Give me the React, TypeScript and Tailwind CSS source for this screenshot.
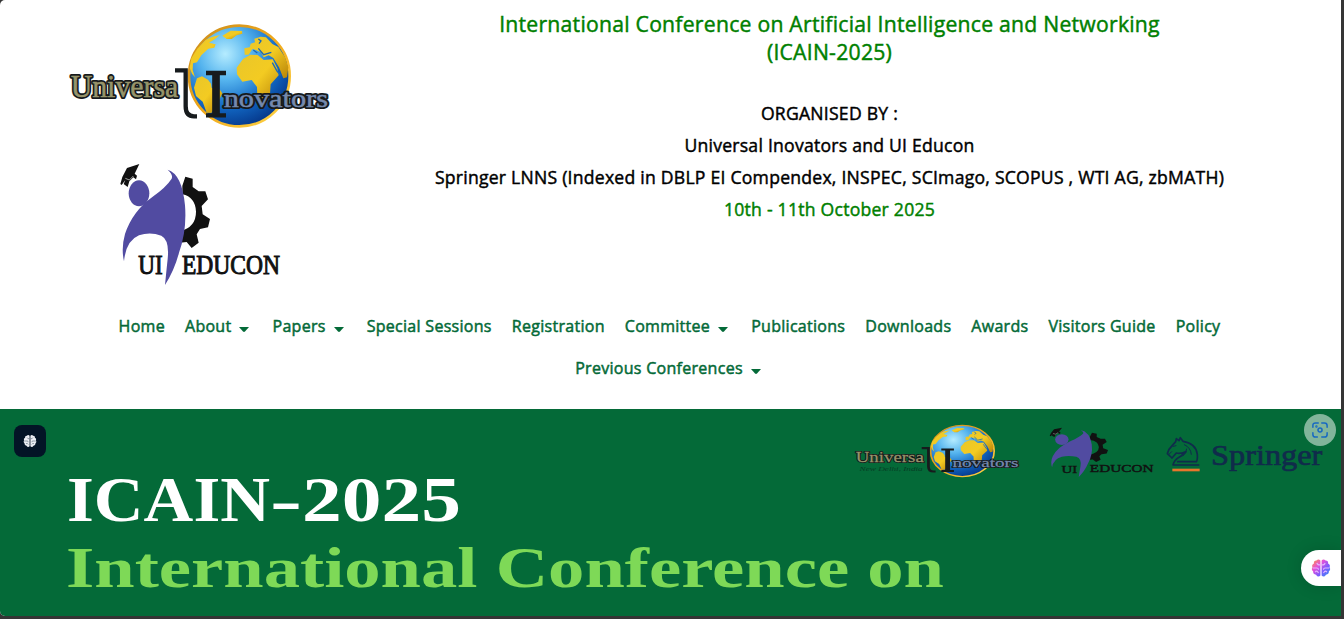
import React from "react";

const SERIF = "'Liberation Serif', serif";

function Globe() {
  return (
    <g>
      <defs>
        <radialGradient id="sea" cx="0.36" cy="0.28" r="0.75">
          <stop offset="0" stopColor="#b5ecff" />
          <stop offset="0.35" stopColor="#55b4ee" />
          <stop offset="0.7" stopColor="#1268c4" />
          <stop offset="1" stopColor="#06398c" />
        </radialGradient>
        <linearGradient id="land" x1="0" y1="0" x2="1" y2="1">
          <stop offset="0" stopColor="#e9c62a" />
          <stop offset="0.5" stopColor="#f3cb22" />
          <stop offset="1" stopColor="#b88307" />
        </linearGradient>
        <linearGradient id="rim" x1="0" y1="0" x2="1" y2="1">
          <stop offset="0" stopColor="#c98c1c" />
          <stop offset="0.5" stopColor="#f0a81a" />
          <stop offset="1" stopColor="#ffd84a" />
        </linearGradient>
      </defs>
      <circle cx="538" cy="183" r="151" fill="url(#sea)" stroke="url(#rim)" strokeWidth="8" />
      <g fill="url(#land)">
        <path d="M487 62 L512 47 L546 48 L547 56 L530 61 L515 72 L500 72 Z" />
        <path d="M437 75 L455 66 L480 60 L462 74 L447 83 L467 88 L463 98 L445 101 L424 121 L411 142 L399 145 L398 165 L405 187 L396 176 L389 158 L394 130 L412 101 Z" />
        <path d="M411 190 L426 184 L444 194 L453 206 L455 219 L478 222 L487 235 L479 251 L471 269 L454 294 L440 293 L428 260 L408 243 L402 218 Z" />
        <path d="M531 178 L530 158 L549 132 L571 119 L593 120 L611 135 L638 133 L652 160 L656 181 L632 208 L630 236 L610 260 L599 269 L592 246 L591 216 L575 195 L547 200 Z" />
        <path d="M554 119 L553 100 L569 97 L572 86 L585 82 L583 71 L602 65 L618 67 L637 87 L655 96 L675 126 L685 157 L681 187 L670 190 L657 157 L640 129 L626 121 L611 127 L603 112 L588 105 L577 102 L566 119 Z" />
      </g>
      <path
        d="M580 105 L592 114 M595 100 L611 119 L634 112 M637 143 L651 168 L662 181 M595 72 L603 78 L597 86"
        stroke="#1b69b7"
        strokeWidth="4"
        fill="none"
      />
    </g>
  );
}

function UniversalLogo({ className, subtitle = false }: { className: string; subtitle?: boolean }) {
  return (
    <svg className={className} viewBox="0 0 840 360" preserveAspectRatio="none" role="img">
      <Globe />
      <g fill="none" stroke="#171b1d" strokeWidth="13">
        <path d="M345 166 H377 V274 Q377 304 402 304 H411" />
        <path d="M438 174 H498 M438 301 H498" />
        <path d="M468 174 V301" strokeWidth="23" />
      </g>
      <g fontFamily={SERIF} strokeLinejoin="round">
        <g stroke="#171a1c" strokeWidth="12">
          <text x="32" y="245" fontSize="92" textLength="323" lengthAdjust="spacingAndGlyphs">Universa</text>
          <text x="491" y="276" fontSize="76" textLength="313" lengthAdjust="spacingAndGlyphs">novators</text>
        </g>
        <text x="32" y="245" fontSize="92" textLength="323" lengthAdjust="spacingAndGlyphs" fill="#96946a" stroke="#96946a" strokeWidth="1.5">Universa</text>
        <text x="491" y="276" fontSize="76" textLength="313" lengthAdjust="spacingAndGlyphs" fill="#7489ae" stroke="#7489ae" strokeWidth="1.5">novators</text>
      </g>
      {subtitle && (
        <text x="50" y="301" fontSize="34" textLength="300" lengthAdjust="spacingAndGlyphs" fontFamily={SERIF} fontStyle="italic" fill="#063d25">New Delhi, India</text>
      )}
    </svg>
  );
}

function EduconLogo({ className }: { className: string }) {
  return (
    <svg className={className} viewBox="0 0 540 405" preserveAspectRatio="none" role="img">
      <path fill="#111" d="M217 92 L226 65 L248 71 L248 96 L266 109 L286 109 L294 133 L275 153 L278 178 L300 192 L294 217 L270 222 L260 238 L266 263 L245 279 L230 261 L210 263 V228 Q258 217 258 170 Q256 126 217 118 Z" />
      <path fill="#514ba1" d="M173 44 Q216 57 225 151 Q231 227 207 293 Q194 344 165 390 Q170 339 173 312 Q179 255 154 242 Q120 229 87 241 Q48 257 42 319 Q33 279 45 237 Q67 169 128 125 Q168 97 185 71 Q190 59 173 44 Z" />
      <ellipse cx="87" cy="115" rx="31" ry="39" fill="#514ba1" />
      <path fill="#111" d="M51 39 L88 27 L74 56 L81 62 L78 73 L70 67 L58 79 L53 96 L41 87 L46 75 L35 90 L31 87 L37 66 Z" />
      <path d="M46 70 L58 75 L70 63" stroke="#eee" strokeWidth="2" fill="none" />
      <g fontFamily={SERIF} fontSize="80" fill="#111" stroke="#111" strokeWidth="3">
        <text x="85" y="358" textLength="73" lengthAdjust="spacingAndGlyphs">UI</text>
        <text x="216" y="357" textLength="294" lengthAdjust="spacingAndGlyphs">EDUCON</text>
      </g>
    </svg>
  );
}

function SpringerLogo() {
  return (
    <svg className="h-[45px] w-[160px] shrink-0 overflow-visible" viewBox="0 0 480 135" role="img">
      <g fill="none" stroke="#102b4b" strokeWidth="5" strokeLinejoin="round" strokeLinecap="round">
        <path d="M98 87 H21 Q24 72 44 61 L59 47 Q43 54 31 51 L18 66 L4 53 L9 40 L29 17 L31 8 L39 14 L43 5 L51 16 Q90 22 94 55 Q95 72 91 77 H35" />
        <path d="M22 31 L30 29 M9 55 L17 47 M55 26 Q74 34 76 55 M62 39 Q63 51 51 60" strokeWidth="3" />
      </g>
      <path d="M19 102 H101" stroke="#e8762c" strokeWidth="8" />
      <text x="135" y="86" fontSize="88" textLength="334" lengthAdjust="spacingAndGlyphs" fontFamily={SERIF} fill="#102b4b" stroke="#102b4b" strokeWidth="2">Springer</text>
    </svg>
  );
}

function Brain({ className, colour, line }: { className: string; colour: string; line: string }) {
  return (
    <svg className={className} viewBox="0 0 24 24">
      <defs>
        <linearGradient id="brainHue" x1="0" y1="0" x2="1" y2="1">
          <stop offset="0" stopColor="#ff9c37" />
          <stop offset="0.35" stopColor="#e550d9" />
          <stop offset="0.65" stopColor="#7a5cff" />
          <stop offset="1" stopColor="#2d95ee" />
        </linearGradient>
      </defs>
      <path fill={colour} d="M11.3 3 Q9 .5 6.5 3 Q3 3 3.5 6.5 Q.5 8 1.7 11 Q0 14 2.5 16 Q2.5 20 6 20 Q8.5 24 11.3 21 Z M12.7 3 Q15 .5 17.5 3 Q21 3 20.5 6.5 Q23.5 8 22.3 11 Q24 14 21.5 16 Q21.5 20 18 20 Q15.5 24 12.7 21 Z" />
      <path fill="none" stroke={line} strokeWidth="1.3" d="M11 8 Q8 9 7 6 M2 12 H7 Q9 12 9 14 M5 17 Q7 14 9 18 M13 8 Q16 9 17 6 M22 12 H17 Q15 12 15 14 M19 17 Q17 14 15 18" />
    </svg>
  );
}

const menu: { label: string; drop?: boolean }[] = [
  { label: "Home" },
  { label: "About", drop: true },
  { label: "Papers", drop: true },
  { label: "Special Sessions" },
  { label: "Registration" },
  { label: "Committee", drop: true },
  { label: "Publications" },
  { label: "Downloads" },
  { label: "Awards" },
  { label: "Visitors Guide" },
  { label: "Policy" },
  { label: "Previous Conferences", drop: true },
];

export default function App() {
  return (
    <div className="h-[619px] w-[1344px] overflow-hidden bg-[#353535] font-['Open_Sans',sans-serif]">
      <div className="relative flex h-[616px] w-[1341px] flex-col overflow-hidden rounded-l-[5px] bg-white">
        <header className="flex h-[300px] shrink-0">
          <div className="flex w-[400px] shrink-0 flex-col gap-5 pt-[15px]">
            <UniversalLogo className="ml-[60px] h-[120px] w-[280px] overflow-visible" />
            <EduconLogo className="ml-[110px] h-[135px] w-[180px] overflow-visible" />
          </div>
          <div className="flex w-[859px] flex-col items-center pt-[10px] text-center tracking-[0.24px] whitespace-nowrap text-black [-webkit-text-stroke:0.45px_currentColor]">
            <h1 className="text-[21.2px] leading-7 text-[#008000]">
              International Conference on Artificial Intelligence and Networking
              <br />
              (ICAIN-2025)
            </h1>
            <div className="mt-[31px] text-[17.6px] leading-8">
              <p>ORGANISED BY :</p>
              <p>Universal Inovators and UI Educon</p>
              <p>Springer LNNS (Indexed in DBLP EI Compendex, INSPEC, SCImago, SCOPUS , WTI AG, zbMATH)</p>
              <p className="text-[#008000]">10th - 11th October 2025</p>
            </div>
          </div>
        </header>
        <nav className="flex h-[109px] shrink-0 flex-wrap content-start justify-center gap-x-5 pt-[5px] pr-[101px] pl-[99px] text-[16px] tracking-[0.29px] text-[#046a38] [-webkit-text-stroke:0.5px_currentColor]">
          {menu.map((item) => (
            <a key={item.label} className="flex h-[42px] items-center whitespace-nowrap">
              {item.label}
              {item.drop && (
                <svg className="mt-[6px] mr-[3px] ml-2 h-[5px] w-[10px]" viewBox="0 0 10 5">
                  <path d="M0 0 H10 L6 4.5 Q5 5.3 4 4.5 Z" fill="#046a38" />
                </svg>
              )}
            </a>
          ))}
        </nav>
        <main className="flex flex-1 flex-col bg-[#046a38]">
          <div className="flex h-[55px] items-start pt-[11px] pl-[849px]">
            <UniversalLogo className="h-[61px] w-[177px] shrink-0 overflow-visible" subtitle />
            <EduconLogo className="mt-1 ml-[17px] h-[55px] w-[117px] shrink-0 overflow-visible" />
            <div className="mt-4 ml-[6px]">
              <SpringerLogo />
            </div>
          </div>
          <svg className="ml-[60px] h-[152px] w-[900px]" viewBox="0 0 900 152">
            <g fontFamily={SERIF} fontWeight="700" fill="#fff">
              <text x="7" y="57" fontSize="63" textLength="203" lengthAdjust="spacingAndGlyphs">ICAIN</text>
              <text x="210" y="57" fontSize="63" textLength="32" lengthAdjust="spacingAndGlyphs">-</text>
              <text x="242" y="57" fontSize="63" textLength="159" lengthAdjust="spacingAndGlyphs">2025</text>
            </g>
            <text x="6" y="123" fontSize="58" textLength="878" lengthAdjust="spacingAndGlyphs" fontFamily={SERIF} fontWeight="700" fill="#7ed957">International Conference on</text>
          </svg>
        </main>
        <button className="absolute top-[425px] left-[14px] flex size-8 items-center justify-center rounded-lg bg-[#031426]">
          <Brain className="size-[14px]" colour="#eceff4" line="#72808e" />
        </button>
        <button className="absolute top-[414px] left-[1304px] flex size-8 items-center justify-center rounded-full bg-[#82b59b]">
          <svg className="size-4" viewBox="0 0 18 18" fill="none" stroke="#1769c2" strokeWidth="1.7" strokeLinecap="round">
            <path d="M7 1 H4 Q1 1 1 4 V6 M11 1 H14 Q17 1 17 4 V6 M1 12 V14 Q1 17 4 17 H6 M11 17 H14 Q17 17 17 14 V12" />
            <circle cx="9" cy="9" r="2.3" />
            <circle cx="5" cy="5" r=".5" />
          </svg>
        </button>
        <button className="absolute top-[550px] right-0 flex h-9 w-10 items-center rounded-l-full bg-white pl-[10px] shadow-[0_0_16px_rgba(0,0,0,0.15)]">
          <Brain className="size-5" colour="url(#brainHue)" line="#e4b4ff" />
        </button>
      </div>
    </div>
  );
}
